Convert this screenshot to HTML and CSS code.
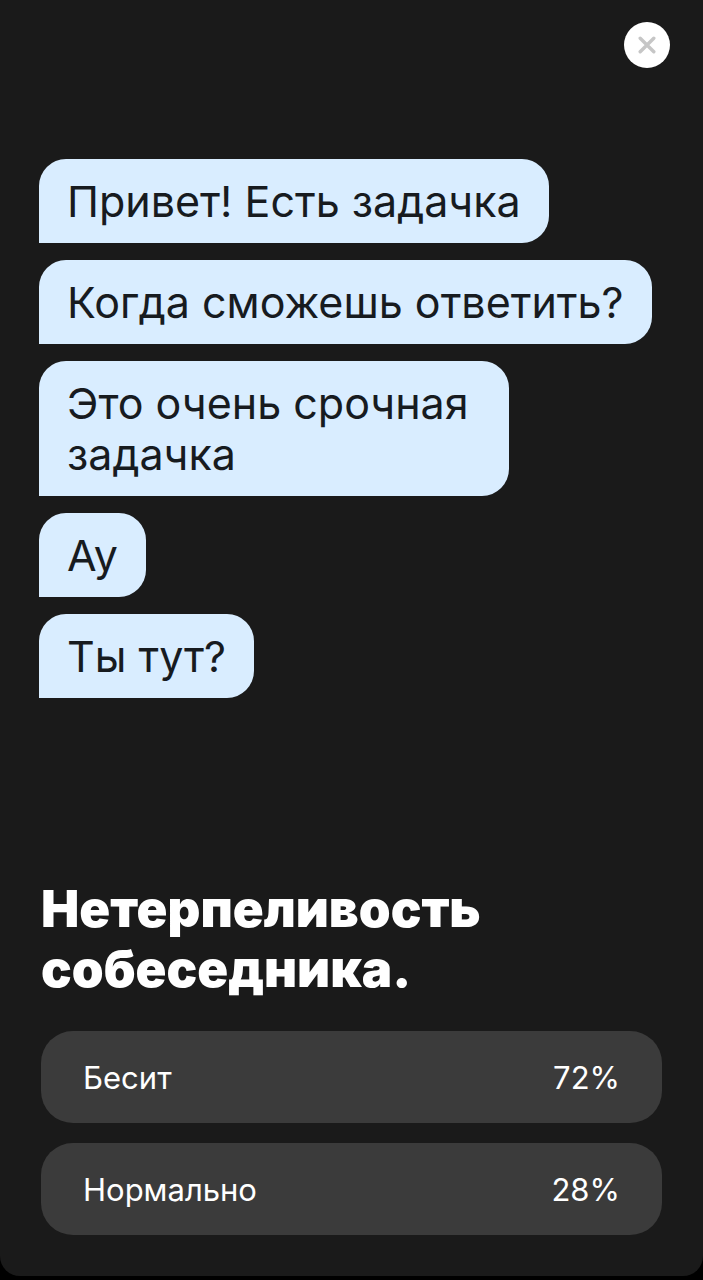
FILE: index.html
```html
<!DOCTYPE html>
<html lang="ru">
<head>
    <meta charset="UTF-8">
    <meta name="viewport" content="width=device-width, initial-scale=1.0">
    <title>Нетерпеливость собеседника</title>
    <link rel="stylesheet" href="styles.css">
</head>
<body>
    <main class="story">
        <header class="top">
            <button type="button" class="close" aria-label="Закрыть">
                <svg width="18" height="18" viewBox="0 0 18 18" fill="none" stroke="#c6c6c6" stroke-width="3.4" stroke-linecap="round">
                    <path d="M2.2 2.2L15.8 15.8M15.8 2.2L2.2 15.8"/>
                </svg>
            </button>
        </header>

        <div class="messages">
            <p class="bubble">Привет! Есть задачка</p>
            <p class="bubble">Когда сможешь ответить?</p>
            <p class="bubble narrow">Это очень срочная задачка</p>
            <p class="bubble">Ау</p>
            <p class="bubble">Ты тут?</p>
        </div>

        <section class="poll">
            <h1>Нетерпеливость собеседника.</h1>
            <button type="button" class="option"><span>Бесит</span><span>72%</span></button>
            <button type="button" class="option"><span>Нормально</span><span>28%</span></button>
        </section>
    </main>
</body>
</html>
```
FILE: styles.css
```css
* {
    box-sizing: border-box;
}
body {
    margin: 0;
    padding-bottom: 4px;
    background: #000;
    font-family: Inter, "Liberation Sans", sans-serif;
}
.story {
    display: flex;
    flex-direction: column;
    min-height: calc(100vh - 4px);
    background: #1a1a1a;
    border-radius: 0 0 20px 20px;
}
.top {
    display: flex;
    justify-content: flex-end;
    padding: 22px 33px 0;
}
.close {
    display: flex;
    align-items: center;
    justify-content: center;
    width: 46px;
    height: 46px;
    padding: 0;
    border: none;
    border-radius: 50%;
    background: #fff;
    cursor: pointer;
}
.messages {
    display: flex;
    flex-direction: column;
    align-items: flex-start;
    gap: 17px;
    padding: 91px 39px 40px;
}
.bubble {
    margin: 0;
    padding: 17px 28px 16px;
    border-radius: 27px 27px 27px 0;
    background: #d9edff;
    color: #171b1f;
    font-size: 43px;
    line-height: 51px;
}
.narrow {
    max-width: 470px;
}
.poll {
    margin-top: auto;
    padding: 0 41px 41px;
}
h1 {
    max-width: 520px;
    margin: 0 0 32px;
    color: #fff;
    font-size: 51px;
    font-weight: 900;
    line-height: 60px;
}
.option {
    display: flex;
    align-items: center;
    justify-content: space-between;
    width: 100%;
    height: 92px;
    padding: 0 42px;
    border: none;
    border-radius: 32px;
    background: #3b3b3b;
    color: #fff;
    font-family: inherit;
    font-size: 31px;
    cursor: pointer;
}
.option + .option {
    margin-top: 20px;
}
```
